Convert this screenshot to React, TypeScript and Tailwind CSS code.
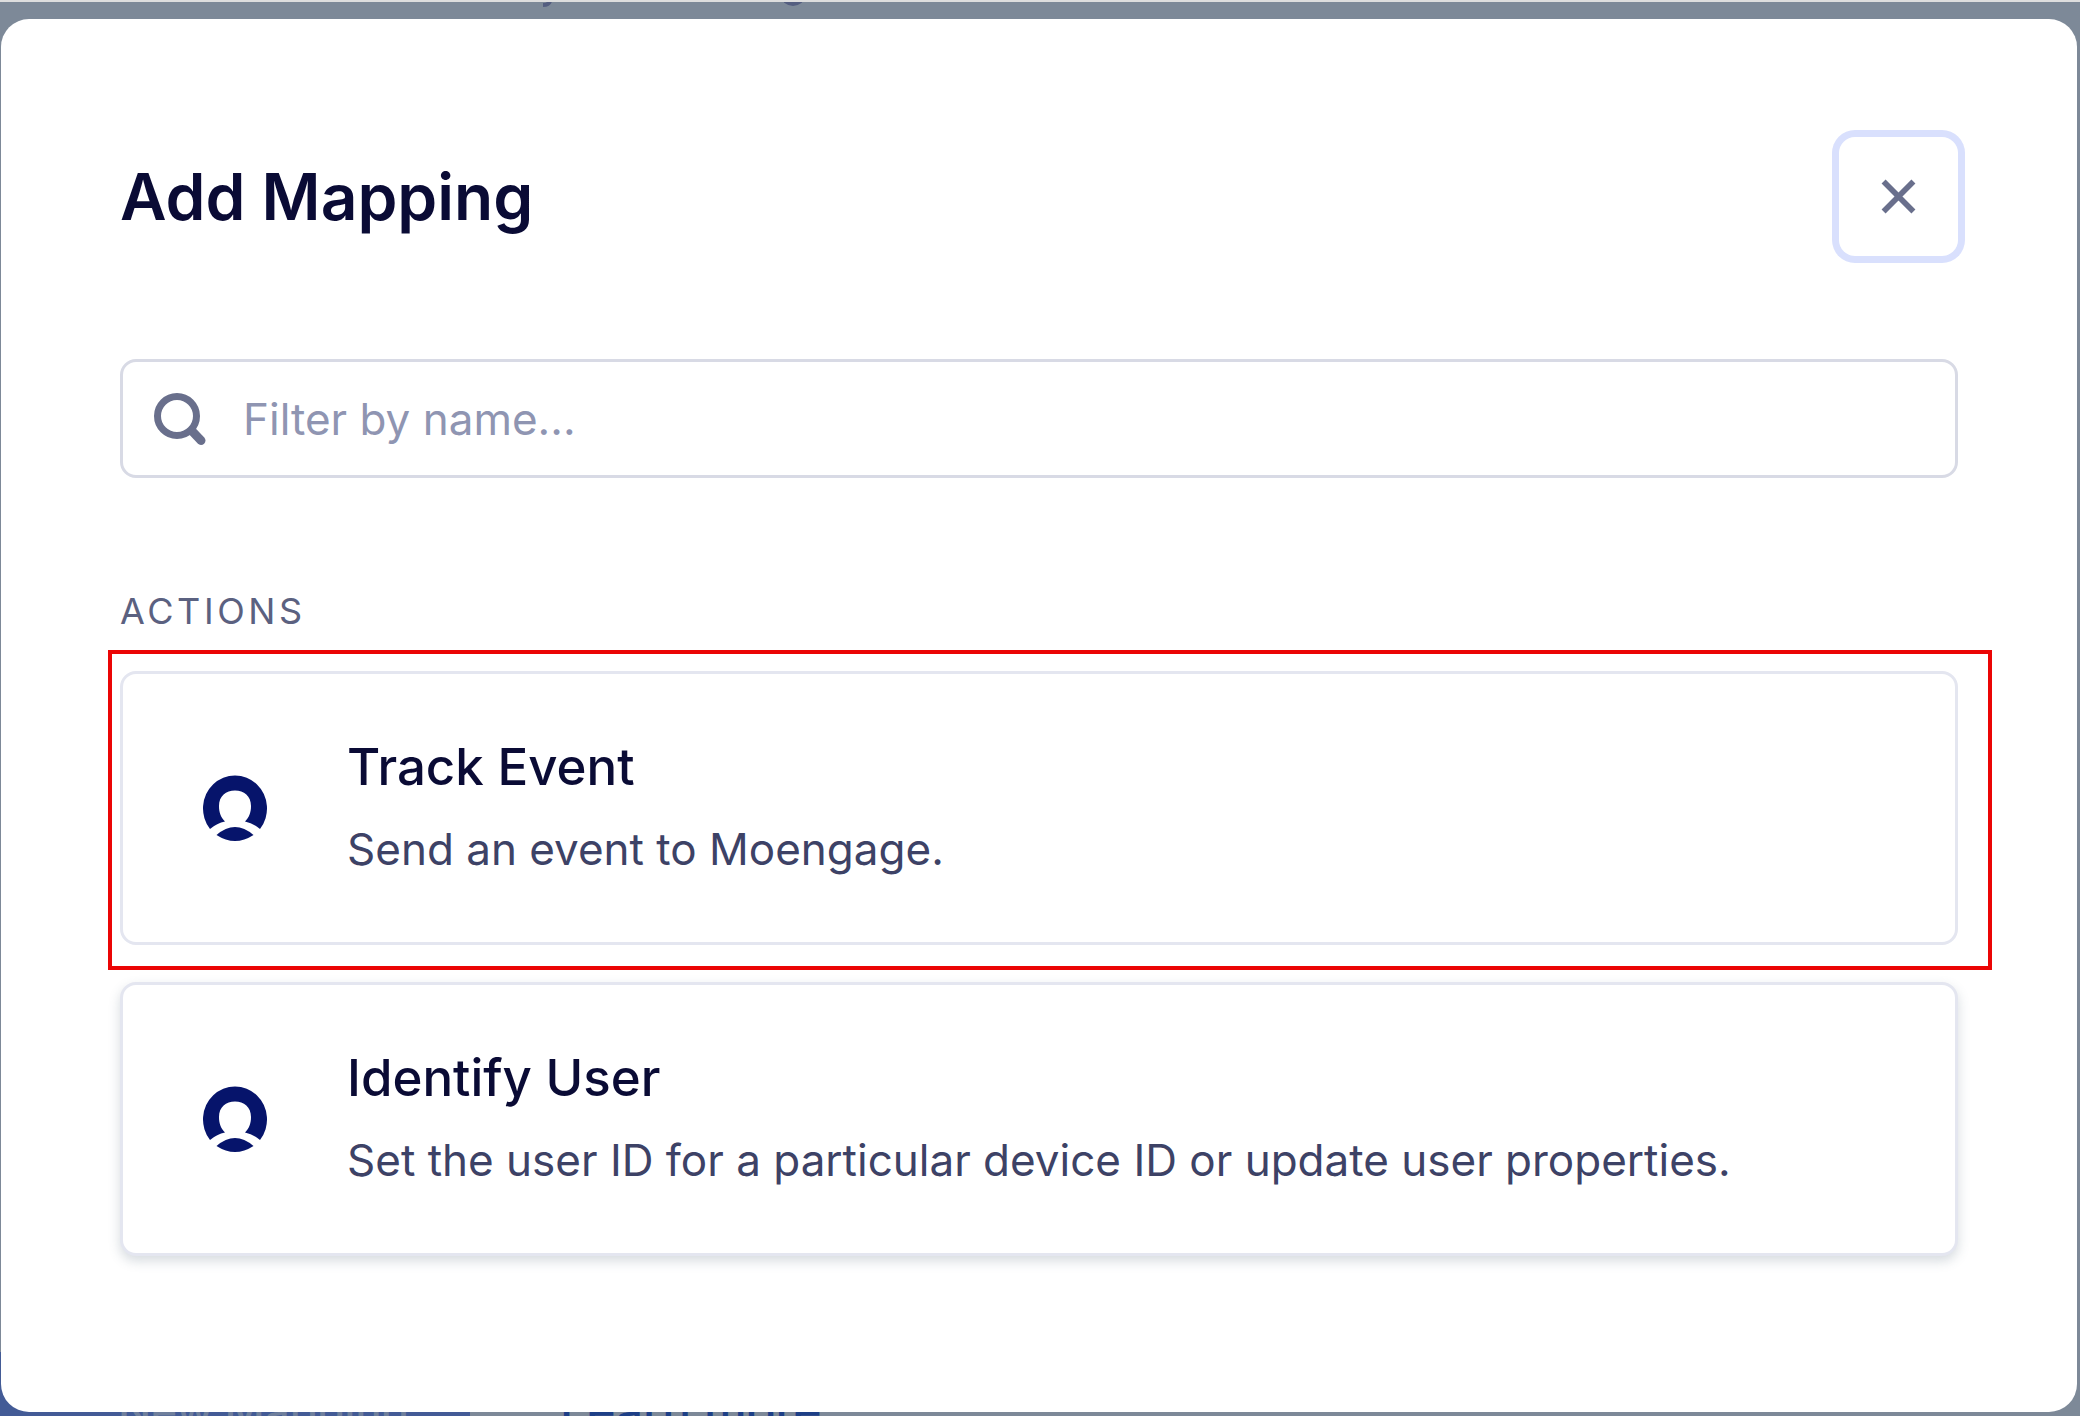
import React, { useState } from 'react';

interface Action {
  id: string;
  name: string;
  description: string;
  highlighted: boolean;
}

const actions: Action[] = [
  { id: 'track', name: 'Track Event', description: 'Send an event to Moengage.', highlighted: true },
  {
    id: 'identify',
    name: 'Identify User',
    description: 'Set the user ID for a particular device ID or update user properties.',
    highlighted: false,
  },
];

const UserLogo: React.FC = () => (
  <svg viewBox="0 0 64 66" className="h-[66px] w-16 shrink-0" fill="#06146b" aria-hidden="true">
    <path d="M7 54A32 33 0 1 1 57 54Q50 48 42 46.5C46.500 42 48 37 48 31C48 21 41 15.500 32 15.500S16 21 16 31C16 37 17.500 42 22 46.500Q14 48 7 54Z" />
    <path d="M13.500 60Q32 44 50.500 60Q32 72 13.500 60Z" />
  </svg>
);

const ActionCard: React.FC<{ action: Action }> = ({ action }) => (
  <div className="relative">
    <button
      type="button"
      className={`flex w-full items-center gap-20 rounded-2xl border-3 border-[#e4e6f0] bg-white px-20 py-[59px] text-left ${
        action.highlighted ? '' : 'shadow-[0_5px_12px_rgba(67,90,111,0.22)]'
      }`}
    >
      <UserLogo />
      <span className="flex flex-col gap-3.5">
        <span className="text-[51px] leading-[68px] font-medium text-[#0a0b35]">{action.name}</span>
        <span className="text-[44px] leading-[68px] text-[#3d4266]">{action.description}</span>
      </span>
    </button>
    {/* Callout frame */}
    {action.highlighted && (
      <div className="pointer-events-none absolute -top-[21px] -right-[34px] -bottom-[25px] -left-3 border-4 border-[#eb0505]"></div>
    )}
  </div>
);

const App: React.FC = () => {
  const [filter, setFilter] = useState('');
  const visible = actions.filter((a) => a.name.toLowerCase().includes(filter.toLowerCase()));

  return (
    <div className="relative flex min-h-screen flex-col overflow-hidden border-t-2 border-[#dedede] bg-[#7d8998] font-[Inter,sans-serif]">
      {/* Dimmed page behind the dialog */}
      <div className="absolute inset-0 flex flex-col justify-between overflow-hidden" aria-hidden="true">
        <svg viewBox="0 0 300 8" className="ml-[520px] h-2 w-[300px]" fill="none" stroke="#545e80" strokeWidth="4">
          <path d="M23 3Q29 3 30 -1" />
          <path d="M265 -1Q273 5 281 -1" />
        </svg>
        <div className="flex h-16 items-start gap-[90px] leading-[116px] font-medium text-[#1d3f87]">
          <div className="w-[470px] bg-[#435b96] pl-[118px] text-[44px] text-[#6f7f9c]">New Mapping</div>
          <div className="text-[48px]">Learn more</div>
        </div>
      </div>

      {/* Dialog */}
      <div
        role="dialog"
        aria-labelledby="dialog-title"
        className="relative mt-[17px] mr-[3px] mb-1 ml-px flex grow flex-col rounded-[28px] bg-white px-[119px] pt-[118px] pb-20"
      >
        <div className="flex items-center justify-between">
          <h1 id="dialog-title" className="text-[64px] leading-[80px] font-semibold text-[#0a0b35]">
            Add Mapping
          </h1>
          <button
            type="button"
            aria-label="Close"
            className="flex size-[119px] items-center justify-center rounded-2xl bg-white ring-[7px] ring-[#d9e0fd]"
          >
            <svg viewBox="0 0 34 34" className="size-[35px]" fill="none" stroke="#696f8c" strokeWidth="5.5">
              <path d="M2.500 2.500L31.500 31.500M31.500 2.500L2.500 31.500" />
            </svg>
          </button>
        </div>

        <label className="mt-[103px] flex h-[119px] items-center gap-9 rounded-2xl border-3 border-[#d8dae5] px-[30px]">
          <svg viewBox="0 0 54 56" className="h-14 w-[54px] shrink-0" fill="none" stroke="#696f8c">
            <circle cx="24" cy="25" r="19.5" strokeWidth="7" />
            <path d="M39 40L48 49.500" strokeWidth="9" strokeLinecap="round" />
          </svg>
          <input
            type="text"
            value={filter}
            onChange={(e) => setFilter(e.target.value)}
            aria-label="Filter by name"
            placeholder="Filter by name..."
            className="min-w-0 grow text-[44px] text-[#0a0b35] outline-none placeholder:text-[#8f95b2]"
          />
        </label>

        <h2 className="mt-[109px] text-[36px] leading-[48px] tracking-widest text-[#5b6180] uppercase">Actions</h2>
        <div className="mt-9 flex flex-col gap-[37px]">
          {visible.map((action) => (
            <ActionCard key={action.id} action={action} />
          ))}
        </div>
      </div>
    </div>
  );
};

export default App;
